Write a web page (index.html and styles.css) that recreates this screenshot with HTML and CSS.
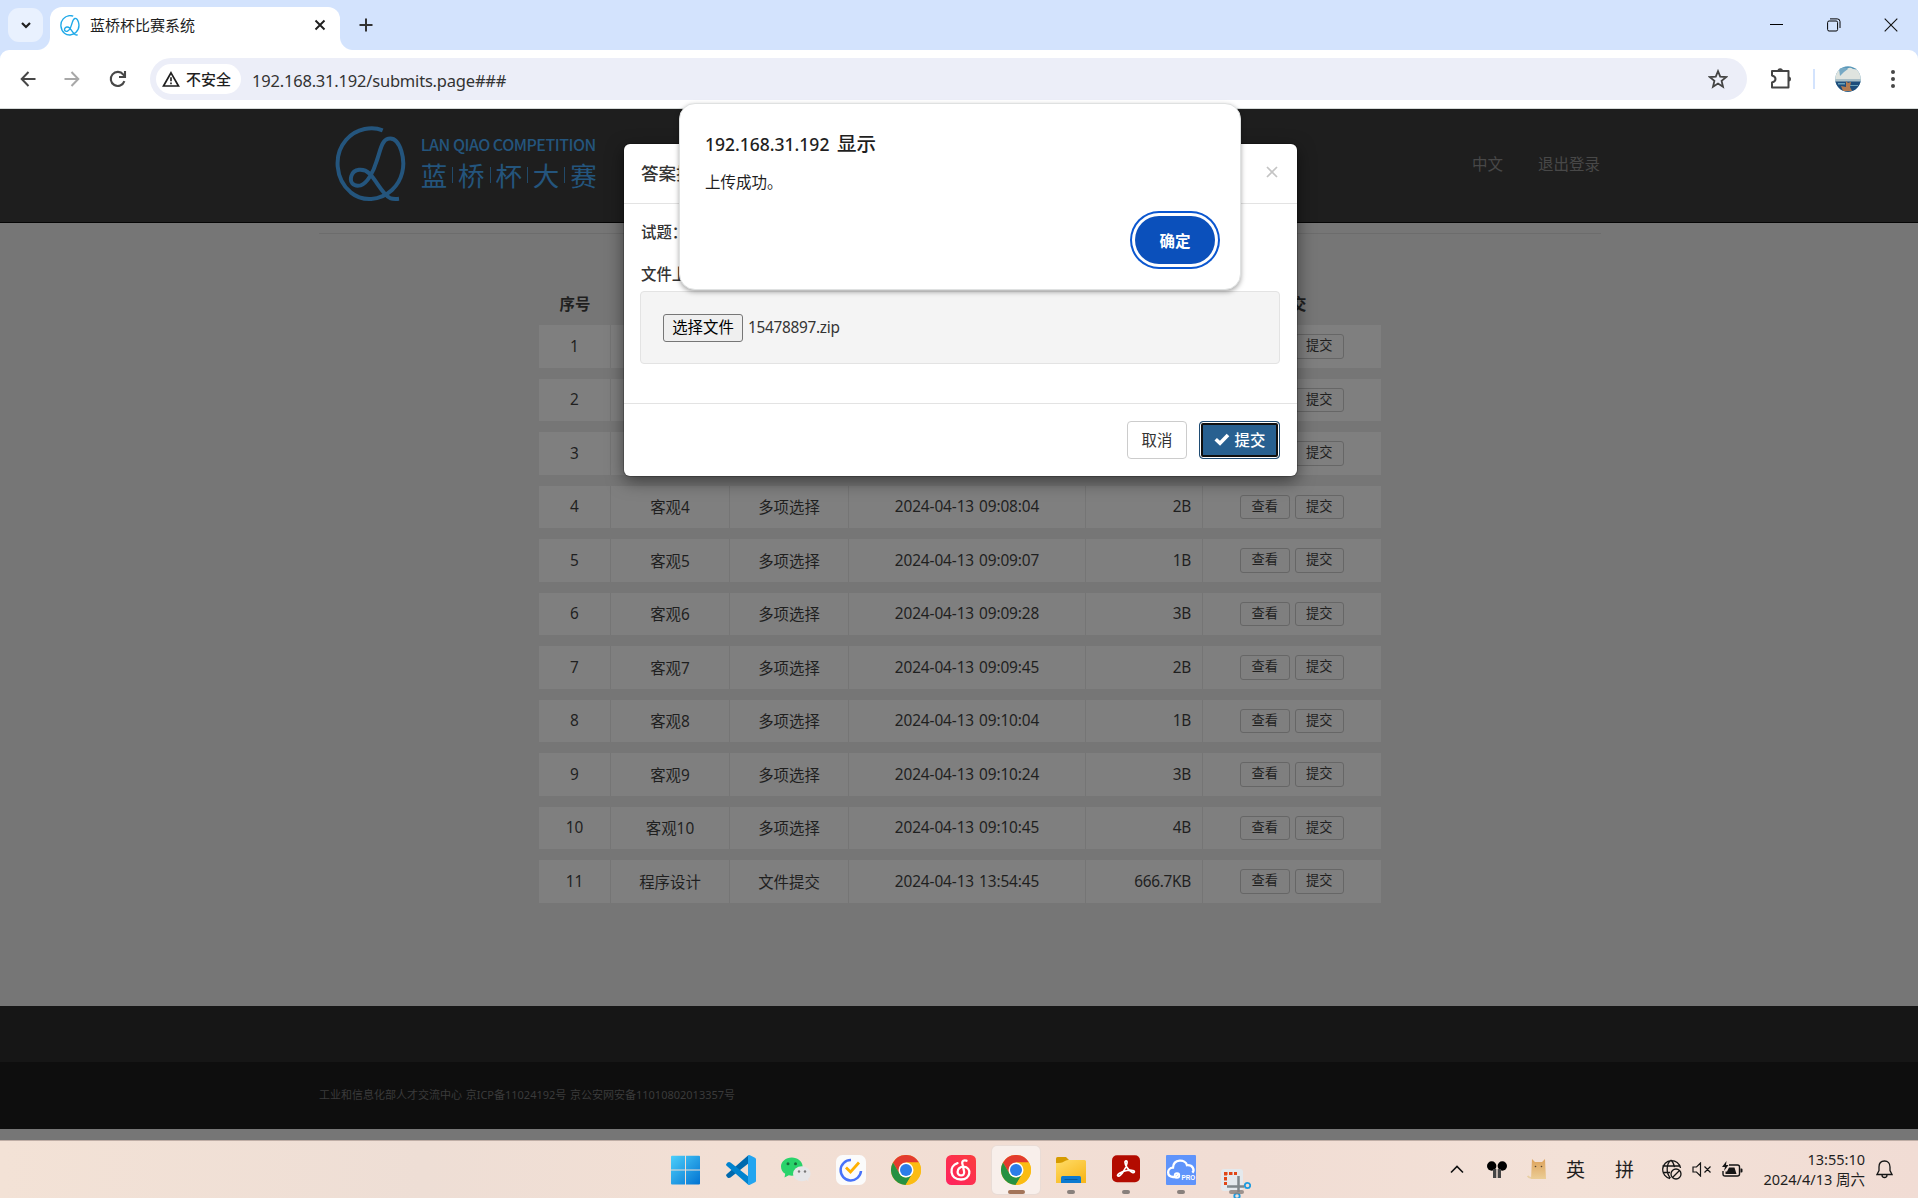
FILE: index.html
```html
<!DOCTYPE html>
<html lang="zh-CN">
<head>
<meta charset="utf-8">
<title>蓝桥杯比赛系统</title>
<link rel="stylesheet" href="styles.css">
</head>
<body>
<svg class="defs" width="0" height="0">
  <defs>
    <symbol id="mark" viewBox="15 30 215 230"><path d="M158 43C128 31 80 35 48 72C10 116 15 188 62 229C97 258 150 255 186 222C216 194 228 150 214 105C205 76 190 65 175 68C155 73 152 100 140 135C130 168 112 202 92 208C68 213 59 198 64 180C71 158 100 155 119 173C140 195 158 236 180 246C190 250 199 249 207 248" fill="none" stroke="currentColor"/></symbol>
    <symbol id="chrome" viewBox="0 0 30 30"><circle cx="15" cy="15" r="15" fill="#fbbc13"/><path d="M2 7.5A15 15 0 0 1 28 7.5L15 7.5L8.5 18.8Z" fill="#e33b2e"/><path d="M2 7.5L8.6 18.7C10 21.2 12.5 22.5 15 22.5L20.5 20L14.5 30A15 15 0 0 1 2 7.5Z" fill="#269142"/><path d="M28 7.5H15L21.5 18.7L14.8 30A15 15 0 0 0 28 7.5Z" fill="#fbbc13"/><circle cx="15" cy="15" r="7.5" fill="#fff"/><circle cx="15" cy="15" r="6" fill="#2b7de9"/></symbol>
  </defs>
</svg>

<header class="tabstrip">
  <button class="tab-search"><svg width="12" height="12" viewBox="0 0 12 12"><path d="M2 4l4 4 4-4" fill="none" stroke="#1f1f1f" stroke-width="2.2"/></svg></button>
  <div class="tab">
    <svg class="favicon" width="20" height="21"><use href="#mark"/></svg>
    <span class="tab-title">蓝桥杯比赛系统</span>
    <svg class="tab-close" width="12" height="12" viewBox="0 0 12 12"><path d="M1.5 1.5l9 9M10.5 1.5l-9 9" stroke="#1f1f1f" stroke-width="1.9"/></svg>
  </div>
  <svg class="new-tab" width="14" height="14" viewBox="0 0 14 14"><path d="M7 .5v13M.5 7h13" stroke="#333" stroke-width="2"/></svg>
  <div class="window-buttons">
    <svg width="14" height="14" viewBox="0 0 14 14"><path d="M0 6.500h13" stroke="#000"/></svg>
    <svg width="14" height="14" viewBox="0 0 14 14"><rect x=".6" y="3" width="10" height="10" rx="1.5" fill="none" stroke="#000"/><path d="M3 .9h7.3Q13 .9 13 3.6V10" fill="none" stroke="#000"/></svg>
    <svg width="14" height="14" viewBox="0 0 14 14"><path d="M.7 .7l12.6 12.6M13.3 .7L.7 13.3" stroke="#111" stroke-width="1.1"/></svg>
  </div>
</header>

<div class="toolbar-wrap"><nav class="toolbar">
  <svg class="tool back" width="16" height="16" viewBox="0 0 16 16"><path d="M8.5 1L1.7 8l6.8 7M2 8h13.5" fill="none" stroke="#474747" stroke-width="2"/></svg>
  <svg class="tool forward" width="16" height="16" viewBox="0 0 16 16"><path d="M7.5 1l6.8 7-6.8 7M14 8H.5" fill="none" stroke="#a8a8a8" stroke-width="2"/></svg>
  <svg class="tool reload" width="18" height="18" viewBox="0 0 18 18"><path d="M15.4 11.2A7 7 0 1 1 14.3 4.6L16 6.3M16 1v6h-6" fill="none" stroke="#474747" stroke-width="2.1"/></svg>
  <div class="omnibox">
    <span class="security"><svg width="18" height="16" viewBox="0 0 18 16"><path d="M9 1.8L16.5 15h-15Z" fill="none" stroke="#1f1f1f" stroke-width="1.7"/><path d="M9 6.3v4M9 11.6v1.6" stroke="#1f1f1f" stroke-width="1.6"/></svg>不安全</span>
    <span class="url">192.168.31.192/submits.page###</span>
    <svg class="star" width="20" height="20" viewBox="0 0 20 20"><path d="M10 2.2l2.2 5.5 5.9.4-4.5 3.8 1.4 5.8L10 14.5l-5 3.2 1.4-5.8L1.9 8.1l5.9-.4Z" fill="none" stroke="#444" stroke-width="1.8"/></svg>
  </div>
  <svg class="puzzle" width="22" height="22" viewBox="0 0 22 22"><path d="M2 4h16.500v16.500H2v-5q3.500-1 3.500-3.500T2 8.500Z" fill="none" stroke="#444" stroke-width="2" stroke-linejoin="round"/><path d="M7.500 4a2.700 2.700 0 0 1 5.400 0ZM18.500 9.500a2.500 2.500 0 0 1 0 5Z" fill="#444"/></svg>
  <i class="toolbar-divider"></i>
  <svg class="avatar" width="26" height="26" viewBox="0 0 26 26"><defs><clipPath id="round"><circle cx="13" cy="13" r="12.7"/></clipPath></defs><g clip-path="url(#round)"><path fill="#5796b8" d="M0 0h26v26H0z"/><path fill="#dfe4df" d="M4 4q4-3 7 0 3-4 7-1 5 0 8 5v6H0V9q1-3 4-5Z"/><path fill="#76a9c4" d="M4 3q5-3 9 0l-4 3-4 4Z"/><path fill="#a8bec6" d="M0 13h26v3H0z"/><path fill="#1e4d7b" d="M0 15.500h26V26H0z"/><path fill="#68a0b8" d="M3 17h7v1.500H3zM15 19h8v1h-8z"/><path fill="#b37a50" d="M11 15l2 2 3-1-1 5 2 4H8l-2-5 5 1Z"/></g></svg>
  <svg class="menu" width="6" height="20" viewBox="0 0 6 20"><g fill="#474747"><circle cx="3" cy="3" r="2"/><circle cx="3" cy="10" r="2"/><circle cx="3" cy="17" r="2"/></g></svg>
</nav></div>

<main class="page">
  <div class="site-header"><div class="container site-bar">
    <div class="brand">
      <svg class="brand-mark" width="71.700" height="76.700"><use href="#mark"/></svg>
      <div class="brand-text">
        <span class="brand-en">LAN QIAO COMPETITION</span>
        <span class="brand-cn"><b>蓝</b><i></i><b>桥</b><i></i><b>杯</b><i></i><b>大</b><i></i><b>赛</b></span>
      </div>
    </div>
    <div class="site-nav"><a>中文</a><a>退出登录</a></div>
  </div></div>

  <div class="container content"><hr class="rule">
    <div class="table">
      <div class="row head"><b>序号</b><b></b><b></b><b></b><b></b><b>提交</b></div>
      <div class="row"><span>1</span><span></span><span></span><span></span><span></span><span><a>查看</a><a>提交</a></span></div>
      <div class="row"><span>2</span><span></span><span></span><span></span><span></span><span><a>查看</a><a>提交</a></span></div>
      <div class="row"><span>3</span><span></span><span></span><span></span><span></span><span><a>查看</a><a>提交</a></span></div>
      <div class="row"><span>4</span><span>客观4</span><span>多项选择</span><span>2024-04-13 09:08:04</span><span>2B</span><span><a>查看</a><a>提交</a></span></div>
      <div class="row"><span>5</span><span>客观5</span><span>多项选择</span><span>2024-04-13 09:09:07</span><span>1B</span><span><a>查看</a><a>提交</a></span></div>
      <div class="row"><span>6</span><span>客观6</span><span>多项选择</span><span>2024-04-13 09:09:28</span><span>3B</span><span><a>查看</a><a>提交</a></span></div>
      <div class="row"><span>7</span><span>客观7</span><span>多项选择</span><span>2024-04-13 09:09:45</span><span>2B</span><span><a>查看</a><a>提交</a></span></div>
      <div class="row"><span>8</span><span>客观8</span><span>多项选择</span><span>2024-04-13 09:10:04</span><span>1B</span><span><a>查看</a><a>提交</a></span></div>
      <div class="row"><span>9</span><span>客观9</span><span>多项选择</span><span>2024-04-13 09:10:24</span><span>3B</span><span><a>查看</a><a>提交</a></span></div>
      <div class="row"><span>10</span><span>客观10</span><span>多项选择</span><span>2024-04-13 09:10:45</span><span>4B</span><span><a>查看</a><a>提交</a></span></div>
      <div class="row"><span>11</span><span>程序设计</span><span>文件提交</span><span>2024-04-13 13:54:45</span><span>666.7KB</span><span><a>查看</a><a>提交</a></span></div>
    </div>
  </div>

  <footer class="footer">
    <div class="footer-top"></div>
    <div class="footer-bottom"><div class="container">工业和信息化部人才交流中心 京ICP备11024192号 京公安网安备11010802013357号</div></div>
  </footer>
</main>

<section class="modal">
  <div class="modal-header"><h4>答案提交</h4><svg width="12" height="12" viewBox="0 0 12 12"><path d="M1 1l10 10M11 1L1 11" stroke="#c4c4c4" stroke-width="1.700"/></svg></div>
  <div class="modal-body">
    <label class="question">试题：</label>
    <label class="upload">文件上传</label>
    <div class="well"><span class="file-button">选择文件</span><span class="file-name">15478897.zip</span></div>
  </div>
  <div class="modal-footer">
    <a class="btn cancel">取消</a>
    <a class="btn submit"><svg width="16" height="13" viewBox="0 0 16 13"><path d="M1.700 6.300l4.300 4L14 2" fill="none" stroke="#fff" stroke-width="3.600"/></svg>提交</a>
  </div>
</section>

<section class="alert">
  <h2>192.168.31.192 <span>显示</span></h2>
  <p>上传成功。</p>
  <button class="ok">确定</button>
</section>

<div class="taskbar">
  <div class="apps">
    <span class="app"><svg width="30" height="30" viewBox="0 0 30 30"><defs><linearGradient id="win" x1="0" y1="0" x2="30" y2="30" gradientUnits="userSpaceOnUse"><stop stop-color="#4dd0fb"/><stop offset="1" stop-color="#0070d0"/></linearGradient></defs><path fill="url(#win)" d="M1 .8h13v13.700h-14v-12.700q0-1 1-1zM15 .8h13q1 0 1 1v12.700H15zM0 15.500H14v14H1q-1 0-1-1zM15 15.500h14v13q0 1-1 1H15z"/></svg></span>
    <span class="app"><svg width="30" height="30" viewBox="0 0 30 30"><path fill="#0069ad" d="M1.500 22.500L.3 21q-.5-1 .3-1.700L22 .5v8.300L4.500 22.600q-1.500 1-3-.1z"/><path fill="#0083cf" d="M1.500 7.500L.3 9q-.5 1 .3 1.700L22 29.500v-8.300L4.500 7.400q-1.500-1-3 .1z"/><path fill="#23a5f0" d="M22 .3q1-.5 2 0l5 2.400q1 .5 1 1.600v21.400q0 1.100-1 1.600l-5 2.400q-1 .5-2 0Z"/></svg></span>
    <span class="app"><svg width="30" height="30" viewBox="0 0 30 30"><path fill="#29d36b" d="M10.800 2.500c6 0 10.800 4 10.800 9s-4.800 9.200-10.800 9.200l-3-.4L3.500 22.500l.7-3.700C1.500 17.200 0 14.500 0 11.500c0-5 4.800-9 10.800-9z"/><ellipse cx="20.800" cy="18.700" rx="8.800" ry="7.500" fill="#e6e6e8"/><path fill="#e6e6e8" d="M24 24l3.500 2.500-.5-4z"/><g fill="#176b39"><circle cx="7" cy="8.800" r="1.500"/><circle cx="14.500" cy="8.800" r="1.500"/></g><g fill="#777"><circle cx="18" cy="16.500" r="1.200"/><circle cx="24" cy="16.500" r="1.200"/></g></svg></span>
    <span class="app"><svg width="30" height="30" viewBox="0 0 30 30"><rect width="30" height="30" rx="6.500" fill="#fbfbfb"/><path d="M15 5A10.200 10.200 0 1 0 25 16" fill="none" stroke="#4772fa" stroke-width="2.500"/><path d="M10 12.500l4.500 4.500L23 7.500" fill="none" stroke="#ffb000" stroke-width="2.800"/></svg></span>
    <span class="app"><svg width="30" height="30"><use href="#chrome"/></svg></span>
    <span class="app"><svg width="30" height="30" viewBox="0 0 30 30"><defs><linearGradient id="net" x1="0" y1="1" x2="1" y2="0"><stop stop-color="#ff2260"/><stop offset="1" stop-color="#fb3d3d"/></linearGradient></defs><rect width="30" height="30" rx="5.500" fill="url(#net)"/><path d="M20.500 5.700q-4.300-1.200-4.300 2.200l1.900 8.600c1 5.200-6.500 5.200-6.500.5 0-3 2.500-5.300 6-5.300 8.500.5 7.500 12.800-2.600 12.800-11.500 0-12.500-13.500-3.500-16.300" fill="none" stroke="#fff" stroke-width="2.300" stroke-linecap="round"/></svg></span>
    <span class="app active"><svg width="30" height="30"><use href="#chrome"/></svg></span>
    <span class="app open"><svg width="30" height="30" viewBox="0 0 30 30"><defs><linearGradient id="fold" x2=".7" y2="1"><stop stop-color="#ffdc68"/><stop offset="1" stop-color="#f8b81d"/></linearGradient></defs><path fill="#d69b00" d="M0 3.500Q0 2 1.500 2H10l3 3v4H0Z"/><path fill="url(#fold)" d="M0 8q6 0 8-1.500Q10 5 12 5h16.500Q30 5 30 6.500V28H0Z"/><path fill="#0c7ad0" d="M5 28v-5.500Q5 21 6.500 21h17q1.500 0 1.500 1.500V28Z"/><path stroke="#075b9e" d="M8.500 24.500h13"/></svg></span>
    <span class="app open"><svg width="30" height="30" viewBox="0 0 30 30"><rect x="1" y=".3" width="28" height="27" rx="5" fill="#b30b00"/><path d="M7 21c-2-1 3-4.500 9-5.500 5-.8 8 .3 7.300 1.500-1.500 2.500-8.500-3.500-9.300-9.500-.3-2.500 2.500-2 2 .5C15.500 13 9.500 22 7 21Z" fill="none" stroke="#fff" stroke-width="1.700"/></svg></span>
    <span class="app open"><svg width="30" height="30" viewBox="0 0 30 30"><rect width="30" height="30" rx="1" fill="#5f94fb"/><path d="M13 18.500L9.300 22H7c-6.500-.5-6.500-9 0-9.300C7.500 3.500 19.500 4 21 10.200c6-.5 8 5 5.300 7.500" fill="none" stroke="#fff" stroke-width="2.300"/><circle cx="11" cy="20.500" r="2.300" fill="none" stroke="#fff" stroke-width="1.800"/><text x="15.500" y="24.500" class="pro">PRO</text></svg></span>
    <span class="app open snip"><svg width="30" height="30" viewBox="0 0 30 30"><rect x="0" y="0" width="22" height="22" rx="3" fill="#e4e9ed"/><path d="M3 4.500h13M4.500 3v13" fill="none" stroke="#e14617" stroke-width="3" stroke-dasharray="3.500 1.500"/><path d="M17.500 7v16M6 17.500h17" stroke="#7f878b" stroke-width="2.500"/><circle cx="26.500" cy="16.500" r="2.700" fill="none" stroke="#1d9be0" stroke-width="1.800"/><circle cx="16" cy="27" r="2.700" fill="none" stroke="#1d9be0" stroke-width="1.800"/></svg></span>
  </div>
  <div class="tray">
    <svg class="t-chev" width="14" height="9" viewBox="0 0 14 9"><path d="M1 7.500l6-6 6 6" fill="none" stroke="#111" stroke-width="1.600"/></svg>
    <svg class="t-buds" width="20" height="18" viewBox="0 0 20 18"><circle cx="4.700" cy="5" r="4.700"/><circle cx="15.300" cy="5" r="4.700"/><path fill="#444" d="M6 8h3.300v9H6zM10.700 8H14v9h-3.300z"/></svg>
    <svg class="t-cat" width="20" height="21" viewBox="0 0 20 21"><defs><linearGradient id="cat" x2="0" y2="1"><stop stop-color="#dda25a"/><stop offset="1" stop-color="#ebcd96"/></linearGradient></defs><path d="M6 18.500q-4 1-5.300-1.500" fill="none" stroke="#e8cfa4" stroke-width="1.800"/><path fill="url(#cat)" d="M5 0l3 3h7l3-3 1 20H4Z"/><circle cx="8.500" cy="7.500" r=".8" fill="#543"/><circle cx="14.500" cy="7.500" r=".8" fill="#543"/></svg>
    <span class="t-ime">英</span><span class="t-pin">拼</span>
    <svg class="t-globe" width="21" height="21" viewBox="0 0 21 21"><g fill="none" stroke="#151515" stroke-width="1.300"><path d="M9 19.500A9 9 0 1 1 19.500 9M1.500 7h17M1.500 13.500H9M9.500 19C4.500 14 5.500 4 10 1.200c2 1.500 3 4 3.500 7"/><circle cx="15" cy="15" r="5"/><path d="M11.500 18.500l7-7"/></g></svg>
    <svg class="t-vol" width="20" height="15" viewBox="0 0 20 15"><path d="M1 5h3.500L8.500 1v13l-4-4H1ZM12.500 4.500l6 6M18.500 4.500l-6 6" fill="none" stroke="#151515" stroke-width="1.200"/></svg>
    <svg class="t-bat" width="21" height="17" viewBox="0 0 21 17"><path d="M7 4h8.500q2 0 2 2v7q0 2-2 2H3q-2 0-2-2v-3" fill="none" stroke="#151515" stroke-width="1.400"/><path d="M18.500 7.500h1q1 0 1 1v2q0 1-1 1h-1zM7 6.500h5.500l2 6.500H3.500V10.500H5ZM4.500 0L0 6h3L2 10l4.500-6H4Z" fill="#151515"/></svg>
    <div class="clock"><span>13:55:10</span><span>2024/4/13 周六</span></div>
    <svg class="t-bell" width="17" height="19" viewBox="0 0 17 19"><path d="M8.500 1C5 1 3 3.500 3 7v3.500L1 14.500h15l-2-4V7c0-3.500-2-6-5.500-6ZM6 15q0 2.500 2.500 2.500T11 15" fill="none" stroke="#151515" stroke-width="1.300"/></svg>
  </div>
</div>
</body>
</html>
```
FILE: styles.css
```css
* { box-sizing: border-box; }

body {
  margin: 0;
  width: 1918px;
  height: 1198px;
  overflow: hidden;
  display: flex;
  flex-direction: column;
  position: relative;
  background: #767676;
  font-family: "Noto Sans", "Noto Sans CJK SC", sans-serif;
  font-size: 15px;
  color: #1f1f1f;
}

svg { display: block; flex: none; }
.defs { position: absolute; }
button { border: 0; padding: 0; font: inherit; }

/* Browser tab strip */
.tabstrip {
  height: 50px;
  flex: none;
  background: #d3e3fd;
  display: flex;
  padding-left: 8px;
}
.tab-search {
  width: 35px;
  height: 34px;
  margin-top: 8px;
  border-radius: 11px;
  background: #e9f1fe;
  display: grid;
  place-items: center;
}
.tab {
  position: relative;
  width: 290px;
  height: 43px;
  margin: 7px 0 0 7px;
  padding: 0 14px 7px 10px;
  border-radius: 12px 12px 0 0;
  background: #fff;
  display: flex;
  align-items: center;
}
.tab::before,
.tab::after {
  content: "";
  position: absolute;
  bottom: 0;
  width: 13px;
  height: 13px;
}
.tab::before { left: -13px; background: radial-gradient(circle at 0 0, transparent 12.5px, #fff 13.5px); }
.tab::after { right: -13px; background: radial-gradient(circle at 100% 0, transparent 12.5px, #fff 13.5px); }
.favicon { color: #1fa9e8; stroke-width: 15; }
.tab-title { margin-left: 10px; font-size: 15px; line-height: 20px; }
.tab-close { margin-left: auto; }
.new-tab { margin: 18px 0 0 19px; }
.window-buttons {
  margin: 18px 20px 0 auto;
  height: 14px;
  display: flex;
  gap: 43px;
}

/* Address bar */
.toolbar-wrap { background: #d3e3fd; flex: none; }
.toolbar {
  height: 59px;
  background: #fff;
  border-bottom: 1px solid #d5d9d8;
  border-radius: 9px 9px 0 0;
  display: flex;
  align-items: center;
}
.back { margin-left: 20px; }
.forward { margin-left: 28px; }
.reload { margin-left: 29px; }
.omnibox {
  width: 1597px;
  height: 42px;
  margin-left: 23px;
  padding: 0 19px 0 6px;
  border-radius: 21px;
  background: #eceef8;
  display: flex;
  align-items: center;
}
.security {
  width: 85px;
  height: 30px;
  padding-left: 6px;
  border-radius: 15px;
  background: #fff;
  display: flex;
  align-items: center;
  gap: 6px;
  font-size: 15px;
  font-weight: 500;
  line-height: 20px;
}
.url { margin-left: 11px; padding-top: 2px; font-size: 16.5px; letter-spacing: -.2px; color: #333; }
.star { margin-left: auto; }
.puzzle { margin-left: 23px; margin-top: -2px; }
.toolbar-divider { width: 2px; height: 20px; margin-left: 21px; background: #d3e3fd; }
.avatar { margin-left: 20px; margin-top: -1px; }
.menu { margin-left: 29px; }

/* Site */
.page { flex: 1; display: flex; flex-direction: column; }
.container { width: 1282px; margin: 0 auto 0 319px; }
.site-header { height: 114px; flex: none; background: #1e1e1e; border-bottom: 1px solid #050505; }
.site-bar { display: flex; height: 113px; justify-content: space-between; }
.brand { display: flex; padding: 17px 0 0 16px; color: #24557d; }
.brand-mark { stroke-width: 12; }
.brand-text { margin: 8px 0 0 14px; width: 176px; display: flex; flex-direction: column; }
.brand-en { font: 500 16px/20px "Noto Sans CJK SC", sans-serif; white-space: nowrap; letter-spacing: -.5px; }
.brand-cn { display: flex; align-items: center; justify-content: space-between; margin-top: 3px; }
.brand-cn b { font: 400 26.5px/36px "Noto Sans CJK SC", sans-serif; }
.brand-cn i { width: 1px; height: 16px; background: #224a69; }
.site-nav { display: flex; gap: 35px; padding: 43px 1px 0 0; font-size: 15.5px; line-height: 24px; color: #484848; }

.content { flex: 1; }
.rule { margin: 10px 0 58px; border: 0; border-top: 1px solid #6c6c6c; }
.table { width: 842px; margin-left: 220px; }
.row {
  display: grid;
  grid-template-columns: 72px 119px 119px 237px 117px 178px;
  height: 42.5px;
  margin-bottom: 11px;
  font-size: 15.4px;
}
.row > * {
  background: #7f7f7f;
  border-right: 1px solid #757575;
  display: flex;
  align-items: center;
  justify-content: center;
}
.row > :last-child { border-right: 0; gap: 5px; }
.row > :nth-child(4) { letter-spacing: -.1px; word-spacing: 1px; }
.row > :nth-child(5) { justify-content: flex-end; padding-right: 11px; letter-spacing: -.3px; }
.row a {
  height: 24.5px;
  padding: 0 10.6px;
  border: 1px solid #666;
  border-radius: 3px;
  font-size: 13.2px;
  line-height: 21px;
}
.row.head { height: 33px; margin-bottom: 0; }
.row.head > * { background: none; border: 0; padding-bottom: 11px; font-weight: 600; }
.row.head > :last-child { padding-right: 2px; }
.footer { flex: none; }
.footer-top { height: 56px; background: #161616; }
.footer-bottom { height: 67px; margin-bottom: 11px; padding-top: 24px; background: #0e0e0e; color: #3b3b3b; font-size: 11px; line-height: 18px; word-spacing: .8px; }

/* Upload modal */
.modal {
  position: absolute;
  left: 624px;
  top: 144px;
  width: 673px;
  height: 332px;
  background: #fff;
  border-radius: 6px;
  box-shadow: 0 5px 17px rgba(0, 0, 0, .5), 0 0 0 1px rgba(0, 0, 0, .2);
  color: #333;
  font-size: 15.4px;
}
.modal-header {
  height: 60px;
  padding: 0 19px 2px 17px;
  border-bottom: 1px solid #e3e3e3;
  display: flex;
  align-items: center;
  justify-content: space-between;
}
.modal-header h4 { margin: 0; font-size: 17.6px; font-weight: 500; line-height: 24px; }
.modal-header svg { margin-bottom: 2px; }
.modal-body { height: 199px; padding: 17px 17px 0 16px; }
.modal-body label { display: block; padding-left: 1px; line-height: 24px; font-weight: 500; }
.modal-body .upload { margin-top: 18px; }
.well {
  height: 73px;
  margin-top: 4px;
  padding: 0 22px;
  background: #f4f4f4;
  border: 1px solid #e3e3e3;
  border-radius: 4px;
  display: flex;
  align-items: center;
  gap: 5px;
}
.file-name { letter-spacing: -.3px; }
.file-button {
  width: 80px;
  height: 28px;
  border: 1px solid #767676;
  border-radius: 3px;
  background: #efefef;
  color: #000;
  text-align: center;
  line-height: 25px;
}
.modal-footer {
  height: 73px;
  padding: 17px 17px 0;
  border-top: 1px solid #e3e3e3;
  display: flex;
  justify-content: flex-end;
  gap: 12px;
}
.btn { height: 38px; padding-bottom: 1px; border-radius: 4px; display: flex; align-items: center; justify-content: center; }
.cancel { width: 60px; border: 1px solid #ccc; }
.submit {
  width: 81px;
  border: 1px solid #204d74;
  background: #286090;
  box-shadow: inset 0 0 0 1px #fff, inset 0 0 0 3px #101010;
  color: #fff;
  gap: 5px;
  font-weight: 500;
}

/* Script alert */
.alert {
  position: absolute;
  left: 679px;
  top: 103px;
  width: 562px;
  height: 187px;
  padding: 28px 25px 0 25px;
  background: #fff;
  border: 1px solid #dfe1e1;
  border-radius: 16px;
  box-shadow: 0 2px 5px rgba(0, 0, 0, .35);
  color: #1f1f1f;
  display: flex;
  flex-direction: column;
}
.alert h2 { margin: 0; font-size: 17.5px; font-weight: 500; line-height: 24px; word-spacing: 3px; }
.alert h2 span { font-size: 19.5px; }
.alert p { margin: 16px 0 0; font-size: 15.5px; line-height: 20px; }
.ok {
  width: 80px;
  height: 48px;
  align-self: flex-end;
  margin-top: 24px;
  border-radius: 24px;
  background: #0b50bb;
  box-shadow: 0 0 0 3px #fff, 0 0 0 5px #0b57d0;
  color: #fff;
  font-weight: 700;
  font-size: 15.5px;
}

/* Taskbar */
.taskbar {
  position: relative;
  flex: none;
  height: 58px;
  border-top: 1px solid #bfaea6;
  background: linear-gradient(90deg, #f3e2d6, #eeded5 22%, #f2dfd4 38%, #f1ddd4 65%, #f3e1d7 82%, #f1dcd4);
  display: flex;
  justify-content: space-between;
}
.apps { display: flex; gap: 7px; margin: 5px 0 0 662px; }
.app {
  position: relative;
  width: 48px;
  height: 48px;
  border-radius: 5px;
  display: grid;
  place-items: center;
}
.app.active { background: #f8efeb; box-shadow: 0 0 0 1px #e9dcd6; }
.app.open::after,
.app.active::after {
  content: "";
  position: absolute;
  bottom: 0;
  left: 20px;
  width: 8px;
  height: 4px;
  border-radius: 2px;
  background: #88807c;
}
.app.active::after { left: 16px; width: 17px; background: #a37459; }
.snip svg { margin-top: 23px; }
.app.snip::after { left: 17px; width: 15px; opacity: .8; }
.pro { font: 700 6.3px "Liberation Sans", sans-serif; fill: #fff; }
.tray { display: flex; align-items: center; height: 57px; padding-right: 25px; font-size: 19px; }
.t-buds { margin-left: 23px; }
.t-cat { margin-left: 20px; }
.t-ime { margin-left: 19px; line-height: 24px; }
.t-pin { margin-left: 30px; line-height: 24px; }
.t-globe { margin-left: 27px; }
.t-vol { margin-left: 10px; }
.t-bat { margin-left: 10px; }
.clock {
  width: 104px;
  margin-left: 18px;
  margin-top: -2px;
  display: flex;
  flex-direction: column;
  align-items: flex-end;
  font-size: 14.5px;
  line-height: 20px;
  white-space: nowrap;
}
.t-bell { margin-left: 11px; }
```
